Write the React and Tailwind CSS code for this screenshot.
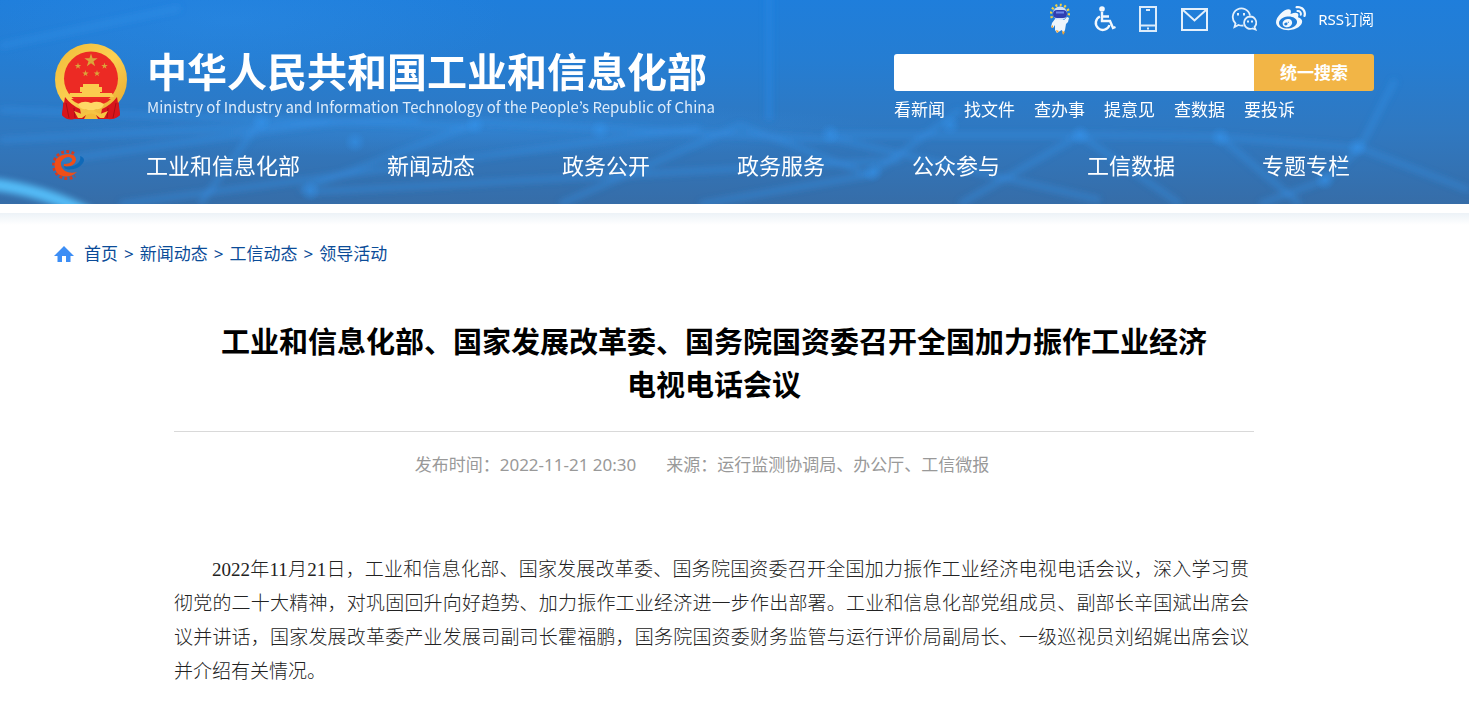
import { FaWeibo } from "react-icons/fa";

const NAV = ["工业和信息化部", "新闻动态", "政务公开", "政务服务", "公众参与", "工信数据", "专题专栏"];
const QUICK = ["看新闻", "找文件", "查办事", "提意见", "查数据", "要投诉"];
const CRUMBS = ["首页", "新闻动态", "工信动态", "领导活动"];

const LINES = [
  [0, 46, 180, 8], [0, 140, 420, 118], [120, 204, 700, 128], [60, 160, 330, 122],
  [300, 190, 480, 122], [480, 122, 840, 140], [200, 204, 260, 122], [840, 140, 1100, 200],
  [560, 204, 740, 125], [740, 125, 870, 175], [870, 175, 960, 110], [830, 135, 1080, 135],
  [1080, 135, 1220, 137], [1080, 135, 960, 204], [1080, 135, 1180, 204], [1220, 137, 1360, 148],
  [1220, 137, 1300, 204], [1360, 148, 1325, 180], [1360, 148, 1395, 80], [1325, 180, 1260, 204],
  [0, 110, 470, 126], [310, 192, 900, 160], [700, 204, 870, 175], [1360, 148, 1469, 190],
];
const NODES = [[310, 191], [355, 142], [475, 125], [600, 130], [830, 134], [873, 172], [950, 125], [1080, 135], [1220, 137], [1357, 147], [1325, 180], [262, 122]];

function HeaderBackdrop() {
  return (
    <svg className="absolute inset-0 h-full w-full" viewBox="0 0 1469 204" preserveAspectRatio="none" aria-hidden="true">
      <defs>
        <linearGradient id="sky" x1="0" y1="0" x2="0" y2="1">
          <stop offset="0" stopColor="#1f7edb" />
          <stop offset="0.3" stopColor="#257dd2" />
          <stop offset="0.65" stopColor="#3078c0" />
          <stop offset="1" stopColor="#366da8" />
        </linearGradient>
        <radialGradient id="glow">
          <stop offset="0" stopColor="#3596f0" stopOpacity="0.5" />
          <stop offset="1" stopColor="#3596f0" stopOpacity="0" />
        </radialGradient>
        <filter id="soft" x="-20%" y="-50%" width="140%" height="200%"><feGaussianBlur stdDeviation="3" /></filter>
      </defs>
      <rect width="1469" height="204" fill="url(#sky)" />
      <ellipse cx="230" cy="20" rx="280" ry="70" fill="url(#glow)" opacity="0.5" />
      <ellipse cx="480" cy="130" rx="420" ry="28" fill="url(#glow)" opacity="0.6" />
      <g filter="url(#soft)">
        {LINES.map(([x1, y1, x2, y2], i) => (
          <line key={i} x1={x1} y1={y1} x2={x2} y2={y2} stroke="#3894ec" strokeOpacity="0.45" strokeWidth="5" />
        ))}
        <path d="M-10 184 Q44 190 90 214" fill="none" stroke="#58c4ff" strokeOpacity="0.9" strokeWidth="12" />
        <rect x="766" y="-10" width="6" height="130" fill="#2a88e4" opacity="0.6" />
      </g>
      {NODES.map(([cx, cy], i) => <circle key={i} cx={cx} cy={cy} r="11" fill="url(#glow)" />)}
    </svg>
  );
}

const STAR = "M0 -1 L0.2245 -0.309 L0.951 -0.309 L0.3633 0.118 L0.5878 0.809 L0 0.382 L-0.5878 0.809 L-0.3633 0.118 L-0.951 -0.309 L-0.2245 -0.309Z";

function Emblem() {
  return (
    <svg className="h-[78px] w-[74px] shrink-0" viewBox="0 0 74 78" role="img" aria-label="国徽">
      <defs>
        <linearGradient id="gold" x1="0" y1="0" x2="1" y2="1">
          <stop offset="0" stopColor="#f0bb38" /><stop offset="0.5" stopColor="#fbd052" /><stop offset="1" stopColor="#e6a62c" />
        </linearGradient>
      </defs>
      <path d="M10 53H64L66 72Q60 77 54 76H20Q13 78 8 72Z" fill="#cf1219" />
      <circle cx="37" cy="36.5" r="36" fill="url(#gold)" />
      <path d="M11 54Q17 62 26 66L28 76H17Q12 76 8 72ZM63 54Q57 62 48 66L46 76H57Q62 76 66 72Z" fill="#d8151b" />
      <path d="M12 60L15 75M62 60L59 75M20 65L21 75M54 65L53 75" stroke="#a90e13" strokeWidth="1" />
      <circle cx="37" cy="35.5" r="27" fill="#ec2a24" />
      <g fill="#dba53a">
        <path d={STAR} transform="translate(37 17.5) scale(7)" />
        <path d={STAR} transform="translate(24 23) scale(3.4)" />
        <path d={STAR} transform="translate(50.5 23) scale(3.4)" />
        <path d={STAR} transform="translate(31.5 30.5) scale(3.4)" />
        <path d={STAR} transform="translate(43 30.5) scale(3.4)" />
      </g>
      <path d="M29 41H45V44H48V49H46V50H58L60 54H14L16 50H28V49H26V44H29Z" fill="#fbcb4e" />
      <path d="M17 56H57Q50 63 37 63T17 56Z" fill="#e8281f" />
      <path d="M24 61Q30 57 37 60Q44 57 50 61Q48 67 42 66Q37 69 32 66Q26 67 24 61Z" fill="#ffd966" />
      <path d="M20 68L28 71L32 69Q37 65 42 69L46 71L54 68L50 75H46L42 72H32L28 75H24Z" fill="#f6c443" />
      <path d="M32 72Q37 69 42 72L44 76H30Z" fill="#f3ba38" />
    </svg>
  );
}

function Robot() {
  return (
    <svg className="h-8 w-5" viewBox="0 0 20 32" aria-hidden="true">
      <path d="M2 15A9 9 0 1 1 18 15" fill="none" stroke="#f6d23f" strokeWidth="2.5" strokeDasharray="2 2.5" />
      <circle cx="10" cy="10.500" r="7" fill="#cfe0f8" />
      <rect x="3" y="7" width="14" height="8" rx="4" fill="#2f3eb0" />
      <path d="M6 9.500H14" stroke="#6d86ea" strokeWidth="2" />
      <path d="M5 16L2 20L1 24L3 25L5 22L5 27L7 30L10 28L12 27L13 31L15 27L16 21L18 19L19 15L17 14L14 17Z" fill="#eef5fc" />
      <path d="M6 27L7 30L9 28ZM12 28L13 32L15 29ZM1 24L3 25L3 22Z" fill="#f2a22c" />
    </svg>
  );
}

function Wheelchair() {
  return (
    <svg className="h-[26px] w-[22px]" viewBox="0 0 22 26" fill="none" stroke="#f2f8fe" strokeWidth="2.4" aria-hidden="true">
      <circle cx="8" cy="3" r="2.800" fill="#f2f8fe" stroke="none" />
      <path d="M8 6V15H16L19 22L21.5 21M8 10.500H15" />
      <path d="M6 10.500A7 7 0 1 0 15.500 19" />
    </svg>
  );
}

function Phone() {
  return (
    <svg className="h-[26px] w-[18px]" viewBox="0 0 18 26" fill="none" stroke="#dcecfb" strokeWidth="2" aria-hidden="true">
      <path d="M1 1H17V25H1ZM1 19.500H17" />
      <path d="M7 4H11M8 22.500H10" />
    </svg>
  );
}

function Mail() {
  return (
    <svg className="h-[23px] w-[27px]" viewBox="0 0 27 23" fill="none" stroke="#e4f0fc" strokeWidth="2" aria-hidden="true">
      <path d="M1 1H26V22H1ZM2 2L13.500 12.500L25 2" />
    </svg>
  );
}

function Wechat() {
  return (
    <svg className="h-6 w-[26px]" viewBox="0 0 26 24" fill="none" stroke="#e4f0fc" strokeWidth="1.8" aria-hidden="true">
      <path d="M12.500 18.500Q10 19 7.500 18L3.500 20L4.500 16.500A8.700 8.700 0 1 1 19 8.500" />
      <path d="M19 9.500A6.200 6.200 0 1 0 21.500 21.500L24.500 22.500L23.500 20A6.200 6.200 0 0 0 19 9.500Z" />
      <path d="M7 6V8.500M13 6V8.500M17 13.500V15.500M21 13.500V15.500" strokeWidth="2" />
    </svg>
  );
}

function GearLogo() {
  return (
    <svg className="h-[30px] w-[34px]" viewBox="0 0 34 30" fill="none" aria-hidden="true">
      <path d="M24 3.500A13.500 13.500 0 1 0 25 26" stroke="#d23c22" strokeWidth="3" strokeDasharray="2.8 2.4" />
      <path d="M26 10Q26 4 18 4Q5 5 4.500 15Q5 26 16 26.500Q22 26.500 27 22Q20 24 15 21Q10 17 11 12Q14 7 19 7Q23 8 22 11Q20 14 14 14Q13 17 16 17Q25 16 26 10Z" fill="#f04e18" />
      <path d="M14 16Q24 18 29 12Q31 9 30 6Q36 8 33 13Q28 20 18 19.500Q14 19 14 16Z" fill="#0f69b8" />
    </svg>
  );
}

export default function App() {
  return (
    <div className="min-h-screen bg-white font-['Noto_Sans','Noto_Sans_CJK_SC',sans-serif] text-[17px]">
      <header className="relative overflow-hidden text-white">
        <HeaderBackdrop />
        <div className="relative pr-[95px] pb-6 pl-[54px]">
          <div className="flex justify-between">
            <a href="#home" className="flex gap-[19px] pt-[43px]">
              <Emblem />
              <div className="font-['Noto_Sans_CJK_SC',sans-serif]">
                <div className="text-[40px] leading-[54px] font-bold whitespace-nowrap">中华人民共和国工业和信息化部</div>
                <div className="font-['Noto_Sans_CJK_KR',sans-serif] text-[15px] leading-5 whitespace-nowrap text-[#dcebfa]">Ministry of Industry and Information Technology of the People’s Republic of China</div>
              </div>
            </a>
            <div className="w-[480px]">
              <div className="flex h-[38px] items-center justify-end">
                <a href="#robot" aria-label="智能问答" className="mr-6"><Robot /></a>
                <a href="#access" aria-label="无障碍" className="mr-[23px]"><Wheelchair /></a>
                <a href="#mobile" aria-label="手机版" className="mr-6"><Phone /></a>
                <a href="#mail" aria-label="邮箱" className="mr-[23px]"><Mail /></a>
                <a href="#wechat" aria-label="微信" className="mr-[19px]"><Wechat /></a>
                <a href="#weibo" aria-label="微博" className="mr-3"><FaWeibo className="h-[30px] w-[30px] text-[#f2f8fe]" /></a>
                <a href="#rss" className="text-[15px] leading-5">RSS订阅</a>
              </div>
              <form className="mt-4 flex h-[37px] overflow-hidden rounded-[3px]" onSubmit={(e) => e.preventDefault()}>
                <input aria-label="搜索" type="text" className="min-w-0 flex-1 bg-white px-3 text-black outline-none" />
                <button type="submit" className="w-[120px] bg-[#f2b546] font-bold">统一搜索</button>
              </form>
              <div className="mt-[7px] flex gap-[19px] leading-6">
                {QUICK.map((q) => <a key={q} href="#search">{q}</a>)}
              </div>
            </div>
          </div>
          <nav className="-ml-1 mt-7 flex items-center">
            <GearLogo />
            <div className="ml-[62px] flex gap-[87px] text-[22px] leading-[30px] whitespace-nowrap">
              {NAV.map((n) => <a key={n} href="#nav">{n}</a>)}
            </div>
          </nav>
        </div>
      </header>
      <div className="mt-[9px] h-3 bg-linear-to-b from-[#ecf2f7] to-white" />

      <main className="pr-[95px] pl-[54px]">
        <nav aria-label="面包屑" className="mt-[17px] flex items-center leading-6 text-[#0b4c98]">
          <svg className="mr-[10px] h-4 w-5" viewBox="0 0 20 16" fill="#3d8ef5" aria-hidden="true">
            <path d="M10 0L20 10H16.500V16H12V10H8V16H3.500V10H0Z" />
          </svg>
          {CRUMBS.map((c, i) => (
            <span key={c} className="flex">
              {i > 0 && <span className="px-[6px]">&gt;</span>}
              <a href="#crumb">{c}</a>
            </span>
          ))}
        </nav>
        <article className="px-[120px]">
          <h1 className="mt-[54px] border-b border-[#d9d9d9] px-10 pb-[25px] text-center text-[29px] leading-[43px] font-bold text-black">
            工业和信息化部、国家发展改革委、国务院国资委召开全国加力振作工业经济电视电话会议
          </h1>
          <p className="mt-[21px] mr-6 flex justify-center gap-[30px] leading-6 text-[#999]">
            <span>发布时间：2022-11-21 20:30</span>
            <span>来源：运行监测协调局、办公厅、工信微报</span>
          </p>
          <p className="mt-[76px] pr-[5px] text-justify indent-[38px] font-['Liberation_Serif','Noto_Sans_CJK_SC',serif] text-[19px] leading-[34px] font-light text-[#222]">
            2022年11月21日，工业和信息化部、国家发展改革委、国务院国资委召开全国加力振作工业经济电视电话会议，深入学习贯彻党的二十大精神，对巩固回升向好趋势、加力振作工业经济进一步作出部署。工业和信息化部党组成员、副部长辛国斌出席会议并讲话，国家发展改革委产业发展司副司长霍福鹏，国务院国资委财务监管与运行评价局副局长、一级巡视员刘绍娓出席会议并介绍有关情况。
          </p>
        </article>
      </main>
    </div>
  );
}
